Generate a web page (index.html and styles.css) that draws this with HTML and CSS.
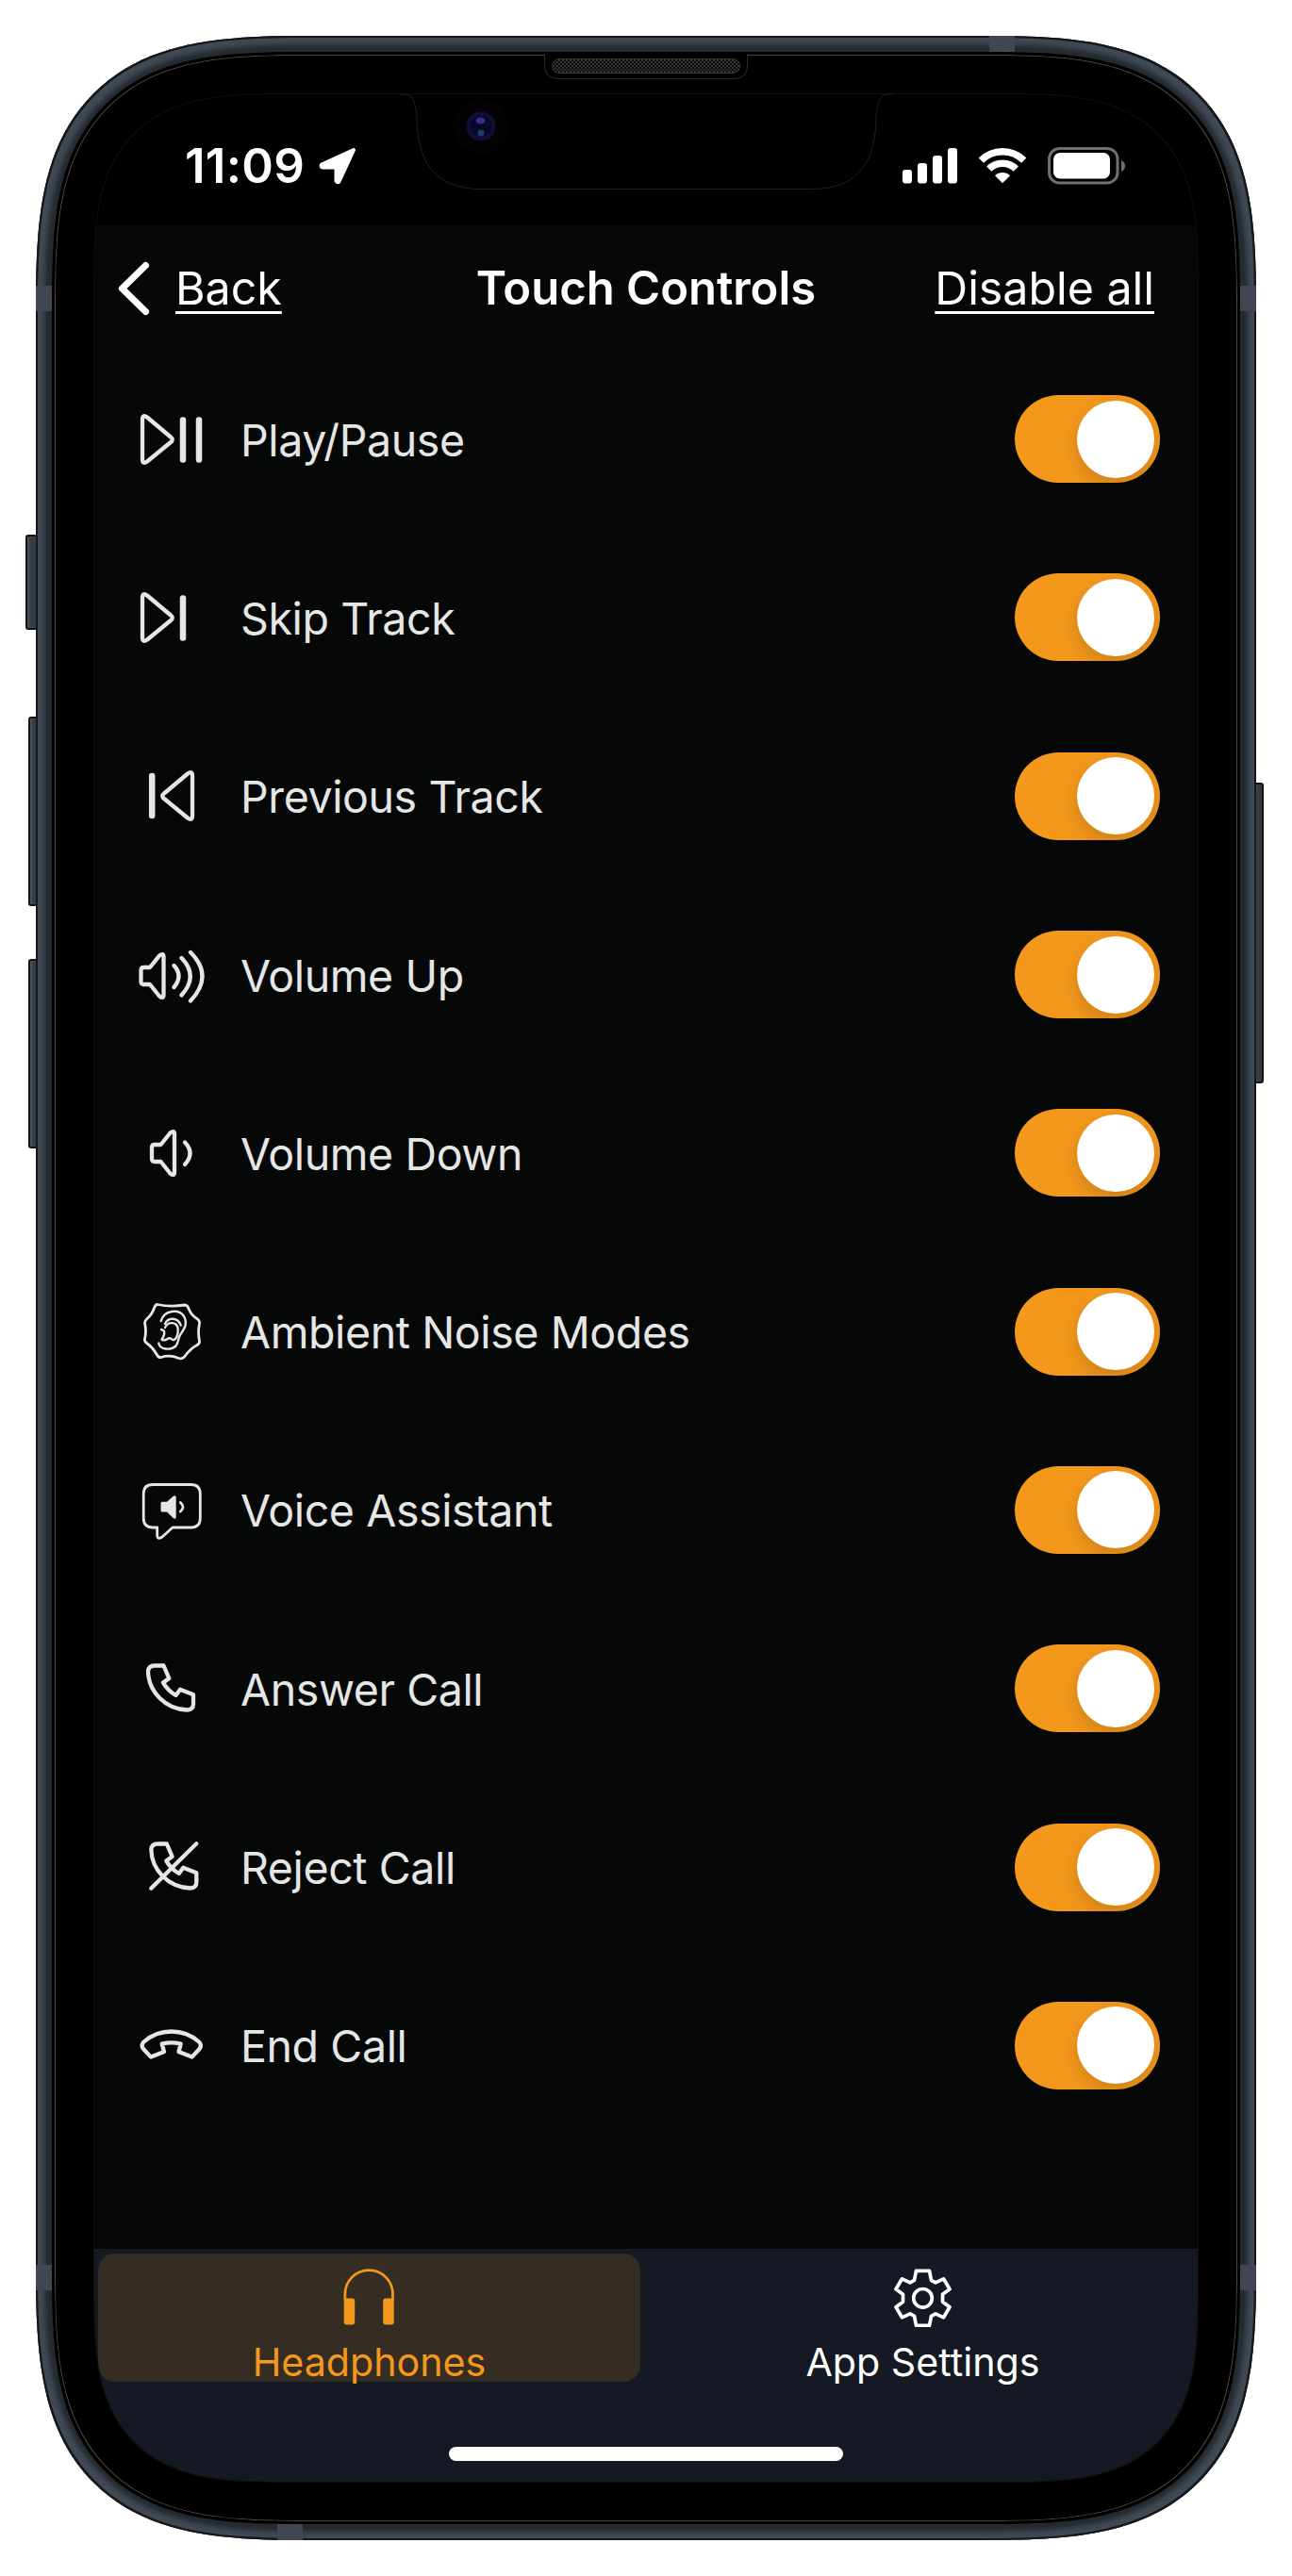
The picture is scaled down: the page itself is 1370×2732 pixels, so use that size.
FILE: index.html
```html
<!DOCTYPE html>
<html lang="en">
  <head>
    <meta charset="UTF-8" />
    <meta name="viewport" content="width=device-width, initial-scale=1.0" />
    <title>Touch Controls</title>
    <link rel="stylesheet" href="styles.css">
  </head>
  <body>
    <!-- shared shapes -->
    <svg width="0" height="0" class="defs">
      <defs>
        <path id="phone" d="M22 15.5H31.5L37.3 29L31 33.6Q36 42 44.5 47L49 40.8L63 46.3V56Q63 62.5 56.5 62.5C33 61.5 15.5 43 15 21.5Q15.5 15.5 22 15.5Z" />
        <path id="speaker" d="M10.5 32H17L27 19.5Q31.5 16 31.5 21V61Q31.5 66 27 62.5L17 50H10.5Q7.5 50 7.5 47V35Q7.5 32 10.5 32Z" />
      </defs>
    </svg>

    <div class="device">
      <span class="side-button mute"></span>
      <span class="side-button vol-up"></span>
      <span class="side-button vol-down"></span>
      <span class="side-button power"></span>

      <div class="frame">
        <span class="band band-left-top"></span>
        <span class="band band-left-bottom"></span>
        <span class="band band-right-top"></span>
        <span class="band band-right-bottom"></span>
        <span class="band band-top"></span>
        <span class="band band-bottom"></span>

        <div class="glass">
          <div class="earpiece"><span class="grille"></span></div>

          <div class="screen">
            <header class="status-bar">
              <div class="status-left">
                <span class="clock">11:09</span>
                <svg width="40" height="40" viewBox="0 0 40 40" fill="#fff" stroke="#fff" stroke-width="4" stroke-linejoin="round">
                  <path d="M37 3L3 18.5Q2 21 4 21.5H18.5V36Q20 38 21.5 36.5Z" />
                </svg>
              </div>
              <div class="status-right">
                <svg width="58" height="38" viewBox="0 0 58 38" fill="#fff">
                  <rect x="0" y="23" width="10" height="14.5" rx="3" />
                  <rect x="16" y="16" width="10" height="21.5" rx="3" />
                  <rect x="32" y="8" width="10" height="29.5" rx="3" />
                  <rect x="48" y="0" width="10" height="37.5" rx="3" />
                </svg>
                <svg width="52" height="38" viewBox="0 0 52 38" fill="none" stroke="#fff">
                  <path d="M3.3 13.2A32 32 0 0 1 48.7 13.2" stroke-width="7.4" />
                  <path d="M11.7 22.2A20 20 0 0 1 40.3 22.2" stroke-width="7.4" />
                  <path d="M18 29.2A11.5 11.5 0 0 1 34 29.2L26 37.3Z" fill="#fff" stroke="none" />
                </svg>
                <svg width="84" height="40" viewBox="0 0 84 40">
                  <rect x="1.5" y="1.5" width="72.5" height="36.5" rx="11" fill="none" stroke="#707070" stroke-width="3" />
                  <rect x="6" y="6" width="60" height="27.5" rx="7" fill="#fff" />
                  <path d="M78 14Q82 16 82 20T78 26Z" fill="#707070" />
                </svg>
              </div>
            </header>

            <nav class="nav-bar">
              <div class="nav-back">
                <svg width="40" height="60" viewBox="0 0 40 60" fill="none" stroke="#fff" stroke-width="7" stroke-linecap="round" stroke-linejoin="round">
                  <path d="M32.5 5.5L7.5 30L32.5 54.5" />
                </svg>
                <a class="nav-link">Back</a>
              </div>
              <h1 class="nav-title">Touch Controls</h1>
              <a class="nav-link nav-action">Disable all</a>
            </nav>

            <ul class="controls">
              <li class="control">
                <svg class="icon" viewBox="0 0 80 80">
                  <path d="M9 19V61Q9 67 14 63.5L39 43Q42.5 40 39 37.5L14 16.5Q9 13 9 19Z" />
                  <path d="M52 19.5V61.5M69 19.5V61.5" class="bar" />
                </svg>
                <span class="label">Play/Pause</span>
                <span class="toggle"><span class="knob"></span></span>
              </li>
              <li class="control">
                <svg class="icon" viewBox="0 0 80 80">
                  <path d="M9 19V61Q9 67 14 63.5L39 43Q42.5 40 39 37.5L14 16.5Q9 13 9 19Z" />
                  <path d="M52 19.5V61.5" class="bar" />
                </svg>
                <span class="label">Skip Track</span>
                <span class="toggle"><span class="knob"></span></span>
              </li>
              <li class="control">
                <svg class="icon" viewBox="0 0 80 80">
                  <path d="M62 19V61Q62 67 57 63.5L32 43Q28.5 40 32 37.5L57 16.5Q62 13 62 19Z" />
                  <path d="M19.2 19V61" class="bar" />
                </svg>
                <span class="label">Previous Track</span>
                <span class="toggle"><span class="knob"></span></span>
              </li>
              <li class="control">
                <svg class="icon" viewBox="0 0 80 80">
                  <use href="#speaker" />
                  <path d="M42.5 30Q52.5 41 42.5 53M50.5 22Q69 41 50.5 61.5M60 16Q85 41 60 67.5" />
                </svg>
                <span class="label">Volume Up</span>
                <span class="toggle"><span class="knob"></span></span>
              </li>
              <li class="control">
                <svg class="icon" viewBox="0 0 80 80">
                  <use href="#speaker" x="11.5" y="-1" />
                  <path d="M54 28.5Q65 40 54 52" />
                </svg>
                <span class="label">Volume Down</span>
                <span class="toggle"><span class="knob"></span></span>
              </li>
              <li class="control">
                <svg class="icon thin" viewBox="0 0 80 80">
                  <path d="M25 11.5Q39 14.5 54 12Q57 12 58.5 17Q61 23 67.5 27Q70 29 69.5 32Q67.5 41 69.5 50Q70 52.5 67 54.5Q60 58 53.5 67Q51 69.5 47.5 68.5Q38 64.5 29 67.5Q26 68 24.5 65Q20 57 13 52Q11 50.5 11.5 48Q13.5 39.5 11.5 31Q11.5 28.5 14 26.5Q19 22.5 22 14Q23 11.5 25 11.5Z" />
                  <path class="fine" d="M28.7 29C32 17 48 16 53 24C57.5 32 53 38 49.5 43C46 48 48 51 44.5 55.5C39 60.5 27 59.5 26.3 52.5" />
                  <path class="fine" d="M33 32C36 24.5 47 25 49.7 33.5" />
                  <path class="fine" d="M33 36C36 29 45 30 46.5 36C47.5 42 45 50 41 49Q38 46 35.5 48Q32 50.5 29.5 48.5Q33 44 32 40Q31 38.5 29 38" />
                </svg>
                <span class="label">Ambient Noise Modes</span>
                <span class="toggle"><span class="knob"></span></span>
              </li>
              <li class="control">
                <svg class="icon thin" viewBox="0 0 80 80">
                  <path d="M20 13.5H60.5Q70.3 13.5 70.3 23.5V49Q70.3 59 60.5 59H41L30 69Q24.7 72.5 24.7 67V59H20Q10.2 59 10.2 49V23.5Q10.2 13.5 20 13.5Z" />
                  <path class="solid" d="M30 31.8H35L41.5 26Q44.7 24 44.7 27.5V48Q44.7 51 41.5 48.8L35 42.5H30Q28.5 42.5 28.5 41V33.3Q28.5 31.8 30 31.8Z" />
                  <path d="M49.3 32.5Q54.8 37.2 49.3 42" />
                </svg>
                <span class="label">Voice Assistant</span>
                <span class="toggle"><span class="knob"></span></span>
              </li>
              <li class="control">
                <svg class="icon" viewBox="0 0 80 80">
                  <use href="#phone" />
                </svg>
                <span class="label">Answer Call</span>
                <span class="toggle"><span class="knob"></span></span>
              </li>
              <li class="control">
                <svg class="icon" viewBox="0 0 80 80">
                  <use href="#phone" x="3.3" />
                  <path d="M66.3 15.3L18.2 62.8" />
                </svg>
                <span class="label">Reject Call</span>
                <span class="toggle"><span class="knob"></span></span>
              </li>
              <li class="control">
                <svg class="icon" viewBox="0 0 80 80">
                  <path d="M18 52.6L10 44Q7 40 10.5 36.5C27 21.8 52.5 21.8 69 36.5Q72.5 40 69.5 44L61.5 52.6L47.5 47L49.7 38.6Q39.7 36 29.7 38.6L32 47Z" />
                </svg>
                <span class="label">End Call</span>
                <span class="toggle"><span class="knob"></span></span>
              </li>
            </ul>

            <footer class="tab-bar">
              <div class="tabs">
                <a class="tab active">
                  <svg width="64" height="64" viewBox="0.8 0 64 64" fill="none" stroke="currentColor" stroke-width="2.8">
                    <path d="M6.7 35V29A25.3 25.3 0 0 1 57.3 29V35" />
                    <path d="M5.5 33.5H14Q17 33.5 17 36.5V58.5Q17 61.5 14 61.5H8.5Q5.5 61.5 5.5 58.5ZM58.5 33.5H50Q47 33.5 47 36.5V58.5Q47 61.5 50 61.5H55.5Q58.5 61.5 58.5 58.5Z" fill="currentColor" stroke="none" />
                  </svg>
                  <span>Headphones</span>
                </a>
                <a class="tab">
                  <svg width="64" height="64" viewBox="-31.5 -33.3 64 64" fill="none" stroke="currentColor" stroke-width="3.7" stroke-linejoin="round">
                    <path d="M-7 -29H7L9 -19L13.5 -16.5L22 -20.5L28.5 -9.5L21 -4V4L28.5 9.5L22 20.5L13.5 16.5L9 19L7 29H-7L-9 19L-13.5 16.5L-22 20.5L-28.5 9.5L-21 4V-4L-28.5 -9.5L-22 -20.5L-13.5 -16.5L-9 -19Z" />
                    <circle r="9.8" />
                  </svg>
                  <span>App Settings</span>
                </a>
              </div>
              <div class="home-indicator"></div>
            </footer>
          </div>

          <!-- notch outline and camera, over the status bar -->
          <svg class="notch" width="521" height="110" viewBox="0 0 521 110" fill="none">
            <path d="M0 1H6Q15 1 17 24C17 70 34 101 84 101.5H437C487 101 504 70 504 24Q506 1 515 1H521" stroke="#1f1f1f" />
            <circle cx="85" cy="35" r="29" fill="#050206" />
            <circle cx="85" cy="35" r="15.5" fill="#0f0f36" />
            <circle cx="85" cy="35" r="11" fill="#07072a" />
            <ellipse cx="84.5" cy="29" rx="5" ry="3.5" fill="#32328c" />
            <ellipse cx="85" cy="42" rx="3.5" ry="3.5" fill="#1a3c68" />
          </svg>
        </div>
      </div>
    </div>
  </body>
</html>
```

FILE: styles.css
```css
* {
  margin: 0;
  padding: 0;
  box-sizing: border-box;
}

body {
  background-color: #fff;
  font-family: Inter, "Liberation Sans", sans-serif;
  color: #fff;
}

.defs {
  position: absolute;
}

/* phone body */
.device {
  position: relative;
  width: 1370px;
  height: 2732px;
  padding: 38px;
}

.frame {
  position: relative;
  width: 1294px;
  height: 2656px;
  padding: 17px;
  background-color: #232a30;
  border-radius: 290px;
  corner-shape: superellipse(1.55);
  box-shadow: inset 0 0 0 2px #14181d, inset 0 0 5px 9px #414953;
}

.glass {
  position: relative;
  height: 100%;
  padding: 42px;
  background-color: #000;
  border: 3px solid #000;
  border-radius: 267px;
  corner-shape: superellipse(1.55);
  box-shadow: inset 0 0 0 1px #4b4847;
}

.side-button {
  position: absolute;
  background-color: #343b43;
  border: 2px solid #101418;
  border-radius: 3px;
  box-shadow: inset 2px 0 2px #4c545c;
}

.mute {
  left: 27px;
  top: 567px;
  width: 14px;
  height: 101px;
}

.vol-up {
  left: 30px;
  top: 760px;
  width: 12px;
  height: 201px;
}

.vol-down {
  left: 30px;
  top: 1017px;
  width: 12px;
  height: 201px;
}

.power {
  left: 1328px;
  top: 830px;
  width: 12px;
  height: 319px;
}

.band {
  position: absolute;
  width: 17px;
  height: 27px;
  background-color: #424553;
}

.band-left-top {
  left: 0;
  top: 265px;
}

.band-left-bottom {
  left: 0;
  bottom: 265px;
}

.band-right-top {
  right: 0;
  top: 265px;
}

.band-right-bottom {
  right: 0;
  bottom: 265px;
}

.band-top {
  right: 256px;
  top: 0;
  width: 27px;
  height: 17px;
}

.band-bottom {
  left: 256px;
  bottom: 0;
  width: 27px;
  height: 17px;
}

.earpiece {
  position: absolute;
  top: -1px;
  left: 519px;
  width: 216px;
  height: 27px;
  padding: 5px 7px;
  background-color: #000;
  border: 1px solid #2b2b2b;
  border-top: none;
  border-radius: 0 0 14px 14px;
}

.grille {
  display: block;
  height: 16px;
  border: 1px solid #3a3a3a;
  border-radius: 8px;
  background: repeating-conic-gradient(#333 0 25%, #0c0c0c 0 50%) 0 0 / 4px 4px;
}

.notch {
  position: absolute;
  left: 367px;
  top: 41px;
}

/* screen */
.screen {
  display: flex;
  flex-direction: column;
  width: 1170px;
  height: 2532px;
  overflow: hidden;
  background-color: #050807;
  border-radius: 202px;
  corner-shape: superellipse(1.55);
  box-shadow: 0 0 0 1px #0e0e0e;
}

.status-bar {
  display: flex;
  justify-content: space-between;
  align-items: center;
  height: 139px;
  padding: 13px 75px 0 96px;
  background-color: #000;
}

.status-left,
.status-right {
  display: flex;
  align-items: center;
}

.status-left {
  gap: 15px;
}

.status-right {
  gap: 22px;
}

.clock {
  font-size: 51px;
  font-weight: 600;
  letter-spacing: 0.3px;
  line-height: 62px;
}

.nav-bar {
  display: grid;
  grid-template-columns: 1fr auto 1fr;
  align-items: center;
  height: 132px;
  padding: 1px 46px 0 22px;
}

.nav-back {
  display: flex;
  align-items: center;
  gap: 24px;
}

.nav-link {
  font-size: 48.3px;
  line-height: 60px;
  text-decoration: underline;
  text-decoration-thickness: 3px;
  text-underline-offset: 7px;
  text-decoration-skip-ink: none;
}

.nav-title {
  padding-left: 24px;
  font-size: 49px;
  font-weight: 600;
  line-height: 60px;
}

.nav-action {
  justify-self: end;
}

.controls {
  flex: 1;
  list-style: none;
}

.control {
  display: flex;
  align-items: center;
  height: 189.3px;
  padding: 0 40px 0 42px;
}

.icon {
  width: 80px;
  height: 80px;
  margin-right: 33px;
  fill: none;
  stroke: #e6e6e6;
  stroke-width: 4.3;
  stroke-linecap: round;
  stroke-linejoin: round;
}

.icon.thin {
  stroke-width: 2.8;
}

.icon .bar {
  stroke-width: 6.5;
}

.icon .fine {
  stroke-width: 2.4;
}

.icon .solid {
  fill: #e6e6e6;
  stroke: none;
}

.label {
  flex: 1;
  padding-top: 2px;
  font-size: 46.5px;
  letter-spacing: -0.4px;
  line-height: 58px;
  color: #e6e6e6;
}

.toggle {
  display: flex;
  justify-content: flex-end;
  width: 154px;
  height: 93px;
  padding: 5.5px 6px;
  background-color: #f4981c;
  border-radius: 47px;
  overflow: hidden;
}

.knob {
  width: 82px;
  height: 82px;
  background-color: #fff;
  border-radius: 50%;
  box-shadow: 0 8px 20px rgba(0, 0, 0, 0.16);
}

/* bottom tabs */
.tab-bar {
  height: 247px;
  padding: 5px 4px 0;
  background-color: #141923;
}

.tabs {
  display: grid;
  grid-template-columns: 1fr 1fr;
  gap: 12px;
}

.tab {
  display: flex;
  flex-direction: column;
  align-items: center;
  gap: 12px;
  height: 136px;
  padding-top: 14px;
  border-radius: 18px;
  font-size: 41.2px;
  line-height: 50px;
}

.tab svg {
  flex-shrink: 0;
}

.tab.active {
  background-color: #352c24;
  color: #f4981c;
}

.home-indicator {
  width: 418px;
  height: 15px;
  margin: 69px auto 0;
  background-color: #fff;
  border-radius: 8px;
}
```
